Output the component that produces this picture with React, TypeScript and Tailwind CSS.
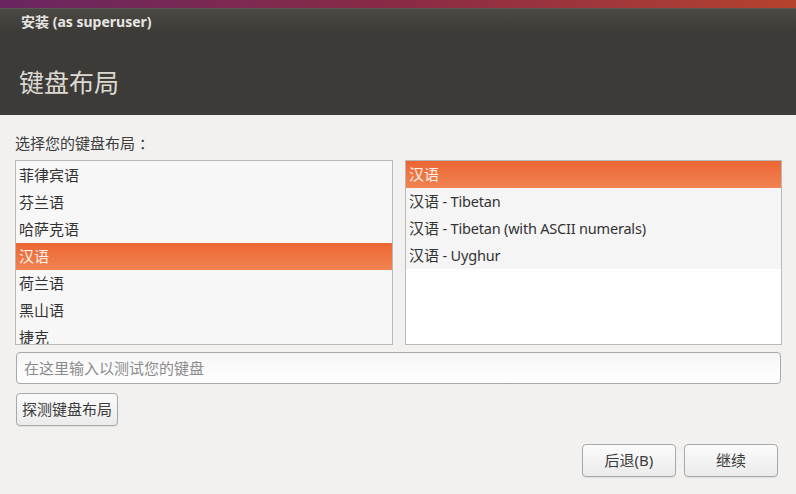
const font = "font-['Noto_Sans','Noto_Sans_CJK_SC',sans-serif]";

const layouts = ["菲律宾语", "芬兰语", "哈萨克语", "汉语", "荷兰语", "黑山语", "捷克"];
const variants = ["", " - Tibetan", " - Tibetan (with ASCII numerals)", " - Uyghur"];

const Row = ({ label, suffix, selected }: { label: string; suffix?: string; selected?: boolean }) => (
  <div
    className={
      selected
        ? "flex h-[27px] shrink-0 items-center whitespace-pre bg-gradient-to-b from-[#ec6532] to-[#f08452] px-[3px] text-[15px] text-[#fdf0ea]"
        : "flex h-[27px] shrink-0 items-center whitespace-pre px-[3px] text-[15px] text-[#333333]"
    }
  >
    {label}
    {suffix && <span className="text-[14.5px] tracking-[-0.2px]">{suffix}</span>}
  </div>
);

const Button = ({ label, className }: { label: string; className?: string }) => (
  <button
    className={`flex h-[33px] items-center justify-center rounded-[4px] border border-[#a9a9a9] bg-gradient-to-b from-[#fbfbfb] to-[#ebebeb] text-[15px] text-[#3c3c3c] shadow-[0_1px_1px_rgba(0,0,0,0.08)] ${className ?? ""}`}
  >
    {label}
  </button>
);

export default function App() {
  return (
    <div className={`flex h-[494px] w-[796px] flex-col overflow-hidden bg-[#f2f1f0] ${font}`}>
      {/* Desktop strip */}
      <div className="h-[8px] shrink-0 bg-gradient-to-r from-[#6a2560] via-[#8a2a45] to-[#b5422c]" />

      {/* Header */}
      <div className="flex h-[107px] shrink-0 flex-col bg-[#3c3b37] bg-gradient-to-b from-[#4b4a45] to-[#3c3b37] bg-[length:100%_24px] bg-no-repeat">
        <div className="h-px bg-[#5a5952]" />
        <div className="pl-[21px] pt-[4px] text-[14px] font-bold leading-[18px] text-[#e8e6e2]">安装 (as superuser)</div>
        <div className="pl-[19px] pt-[36px] text-[25px] leading-[30px] text-[#dcd9d3]">键盘布局</div>
      </div>

      {/* Body */}
      <div className="flex flex-1 flex-col pl-[15px] pr-[14px]">
        <div className="pt-[18px] text-[15px] leading-[20px] text-[#3c3c3c]">选择您的键盘布局 ：</div>

        <div className="mt-[7px] flex h-[185px] gap-[12px]">
          <div className="flex w-[378px] flex-col overflow-hidden border border-[#b9b9b9] bg-[#f7f7f7] pt-px">
            {layouts.map((l) => (
              <Row key={l} label={l} selected={l === "汉语"} />
            ))}
          </div>
          <div className="flex w-[377px] flex-col overflow-hidden border border-[#b9b9b9] bg-white">
            {variants.map((v, i) => (
              <div key={i} className={i === 0 ? "" : "bg-[#f5f5f5]"}>
                <Row label="汉语" suffix={v} selected={i === 0} />
              </div>
            ))}
          </div>
        </div>

        <div className="ml-px mr-px mt-[7px] flex h-[32px] items-center rounded-[4px] border border-[#a9a9a9] bg-gradient-to-b from-[#f6f6f6] to-white px-[7px] text-[15px] text-[#8c8c8c]">
          在这里输入以测试您的键盘
        </div>

        <div className="ml-px mt-[9px] flex">
          <Button label="探测键盘布局" className="w-[102px]" />
        </div>

        <div className="mt-[18px] flex justify-end gap-[8px] pr-[4px]">
          <Button label="后退(B)" className="w-[94px]" />
          <Button label="继续" className="w-[94px]" />
        </div>
      </div>
    </div>
  );
}
